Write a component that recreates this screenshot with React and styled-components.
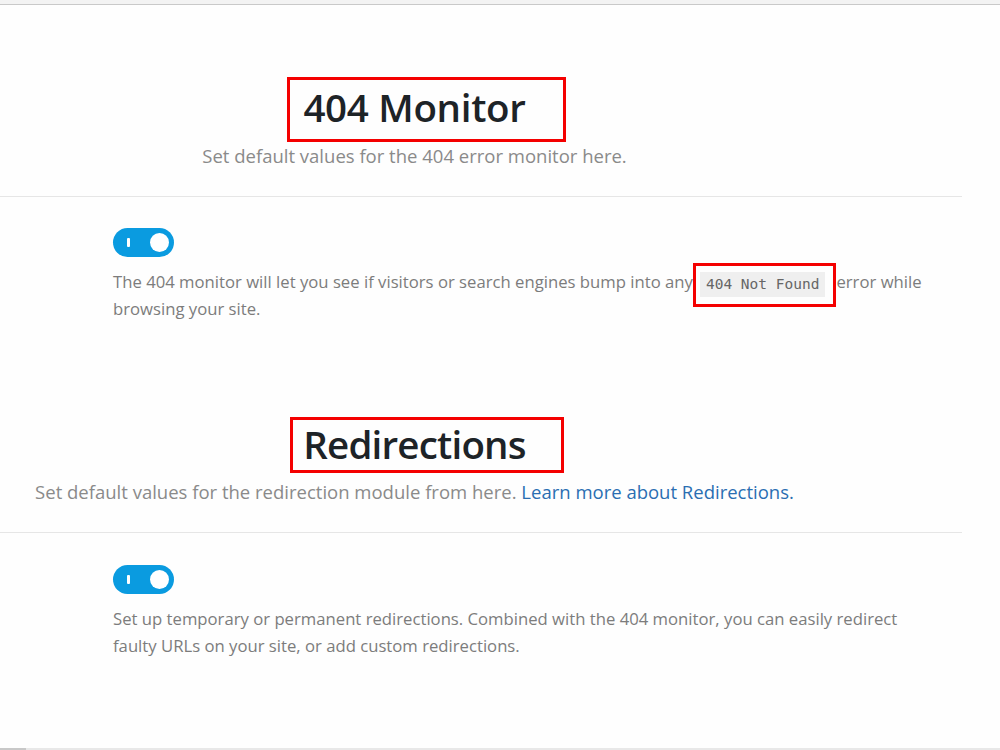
import React from "react";
import styled, { createGlobalStyle } from "styled-components";

const Global = createGlobalStyle`
  html, body { margin: 0; padding: 0; background: #fefefe; }
  body { font-family: "Open Sans", "Noto Sans", sans-serif; }
  * { box-sizing: border-box; }
`;

const Page = styled.div`
  width: 1000px;
  height: 750px;
  display: flex;
  flex-direction: column;
  overflow: hidden;
`;

const TopBar = styled.div`
  height: 5px;
  flex: none;
  background: #f3f3f3;
  border-bottom: 1px solid #c9c9c9;
`;

const Main = styled.div`
  width: 962px;
  flex: 1;
  display: flex;
  flex-direction: column;
`;

const Header = styled.header`
  display: flex;
  flex-direction: column;
  align-items: center;
  padding: ${(p) => p.$pad};
  padding-right: 133px;
  border-bottom: 1px solid #e6e6e6;
`;

const Title = styled.h2`
  margin: 0 0 0 ${(p) => p.$shift};
  display: inline-block;
  border: 3px solid #f40000;
  padding: ${(p) => p.$pad};
  font-size: 38.5px;
  line-height: 48px;
  font-weight: 600;
  color: #1d2327;
  letter-spacing: ${(p) => p.$ls};
`;

const Sub = styled.p`
  margin: ${(p) => p.$mt} 0 0;
  font-size: 18.5px;
  line-height: 26px;
  color: #8a8a8a;
`;

const Link = styled.a`
  color: #2a6eb2;
  text-decoration: none;
`;

const Body = styled.section`
  padding: ${(p) => p.$pad};
  padding-left: 113px;
  padding-right: 30px;
  display: flex;
  flex-direction: column;
  align-items: flex-start;
`;

const Toggle = styled.span`
  width: 61px;
  height: 29px;
  border-radius: 15px;
  background: #0a9be0;
  display: flex;
  align-items: center;
  justify-content: space-between;
  padding: 0 5px 0 14px;
`;

const Bar = styled.span`
  width: 3px;
  height: 9px;
  background: #fff;
  border-radius: 1px;
`;

const Knob = styled.span`
  width: 19px;
  height: 19px;
  border-radius: 50%;
  background: #fff;
`;

const Desc = styled.p`
  margin: 12px 0 0;
  font-size: 16.7px;
  line-height: 26.5px;
  color: #7c7c7c;
`;

const Mark = styled.span`
  display: inline-block;
  border: 3px solid #f40000;
  padding: 4px 8px 7px 4px;
  margin: -10px 0 -12px;
  vertical-align: middle;
  line-height: 25px;
`;

const Code = styled.code`
  display: inline-block;
  background: #efefef;
  padding: 0 6px;
  font-family: "DejaVu Sans Mono", "Liberation Mono", monospace;
  font-size: 14.5px;
  line-height: 25px;
  color: #666;
`;

const Spacer = styled.div`
  height: ${(p) => p.$h};
`;

const BottomBar = styled.div`
  height: 2px;
  width: 1000px;
  flex: none;
  background: #e8e8e8;
  display: flex;
`;

const Thumb = styled.span`
  width: 26px;
  background: #c8c8c8;
`;

function Switch() {
  return (
    <Toggle>
      <Bar />
      <Knob />
    </Toggle>
  );
}

export default function App() {
  return (
    <Page>
      <Global />
      <TopBar />
      <Main>
        <Header $pad="72px 0 27px">
          <Title $pad="3px 37px 8px 13px" $shift="24px" $ls="-0.3px">
            404 Monitor
          </Title>
          <Sub $mt="1px">Set default values for the 404 error monitor here.</Sub>
        </Header>
        <Body $pad="31px 0 0">
          <Switch />
          <Desc>
            The 404 monitor will let you see if visitors or search engines bump into any
            <Mark>
              <Code>404 Not Found</Code>
            </Mark>
            error while browsing your site.
          </Desc>
        </Body>
        <Spacer $h="95px" />
        <Header $pad="0 0 27px">
          <Title $pad="0 35px 2px 10px" $shift="25px" $ls="-0.8px">
            Redirections
          </Title>
          <Sub $mt="6px">
            Set default values for the redirection module from here.{" "}
            <Link href="#">Learn more about Redirections.</Link>
          </Sub>
        </Header>
        <Body $pad="32px 0 0">
          <Switch />
          <Desc>
            Set up temporary or permanent redirections. Combined with the 404 monitor, you can
            easily redirect faulty URLs on your site, or add custom redirections.
          </Desc>
        </Body>
      </Main>
      <BottomBar>
        <Thumb />
      </BottomBar>
    </Page>
  );
}
